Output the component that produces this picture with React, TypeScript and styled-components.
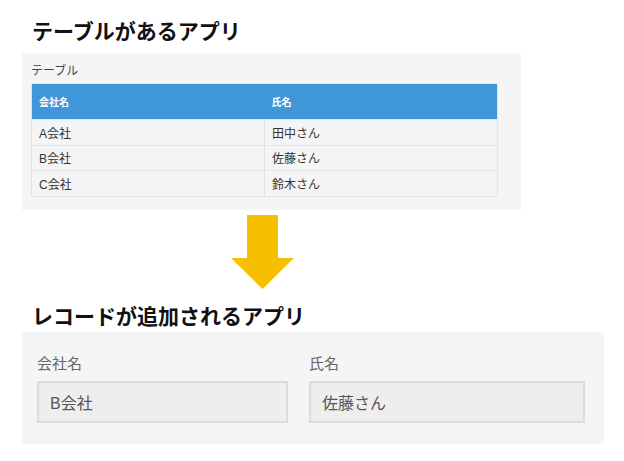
import React from "react";
import styled, { createGlobalStyle } from "styled-components";

const GlobalStyle = createGlobalStyle`
  html, body {
    margin: 0;
    padding: 0;
    background: #ffffff;
  }
  body {
    font-family: "Liberation Sans", "Noto Sans CJK JP", sans-serif;
    color: #333;
  }
`;

const rows = [
  { company: "A会社", name: "田中さん" },
  { company: "B会社", name: "佐藤さん" },
  { company: "C会社", name: "鈴木さん" },
];

const App = () => {
  return (
    <Page>
      <GlobalStyle />
      <Heading>テーブルがあるアプリ</Heading>
      <TablePanel>
        <PanelLabel>テーブル</PanelLabel>
        <Table>
          <thead>
            <tr>
              <HeadCell>会社名</HeadCell>
              <HeadCell>氏名</HeadCell>
            </tr>
          </thead>
          <tbody>
            {rows.map((row) => (
              <tr key={row.company}>
                <BodyCell>{row.company}</BodyCell>
                <BodyCell>{row.name}</BodyCell>
              </tr>
            ))}
          </tbody>
        </Table>
      </TablePanel>

      <ArrowBox>
        <svg width="63" height="74" viewBox="0 0 63 74">
          <rect x="16" y="0" width="31" height="44" fill="#f6bf00" />
          <polygon points="0,43 63,43 31.5,74" fill="#f6bf00" />
        </svg>
      </ArrowBox>

      <Heading $second>レコードが追加されるアプリ</Heading>
      <FormPanel>
        <Field>
          <FieldLabel>会社名</FieldLabel>
          <FieldValue>B会社</FieldValue>
        </Field>
        <Field>
          <FieldLabel>氏名</FieldLabel>
          <FieldValue>佐藤さん</FieldValue>
        </Field>
      </FormPanel>
    </Page>
  );
};

const Page = styled.div`
  width: 624px;
  padding-top: 18px;
`;

const Heading = styled.h1<{ $second?: boolean }>`
  margin: 0 0 ${({ $second }) => ($second ? "5px" : "11px")} 32px;
  font-family: "Noto Sans CJK JP", sans-serif;
  font-size: 21px;
  line-height: 24px;
  font-weight: 700;
  color: #111;
`;

const TablePanel = styled.div`
  margin-left: 22px;
  width: 499px;
  box-sizing: border-box;
  padding: 9px 0 13px 9px;
  background: #f5f5f5;
`;

const PanelLabel = styled.div`
  font-size: 12px;
  line-height: 18px;
  color: #444;
  margin-bottom: 3px;
`;

const Table = styled.table`
  width: 467px;
  border-collapse: collapse;
  table-layout: fixed;
  border: 1px solid #e4e4e4;
`;

const HeadCell = styled.th`
  height: 35px;
  padding: 0 0 0 7px;
  background: #3f97da;
  color: #fff;
  font-size: 10px;
  font-weight: 700;
  text-align: left;
  border: none;
`;

const BodyCell = styled.td`
  height: 24.5px;
  padding: 0 0 0 7px;
  font-size: 12px;
  color: #333;
  background: #f5f5f5;
  border: 1px solid #e4e4e4;
`;

const ArrowBox = styled.div`
  display: flex;
  margin: 5px 0 14px 231px;
  height: 74px;
`;

const FormPanel = styled.div`
  margin-left: 22px;
  width: 582px;
  box-sizing: border-box;
  padding: 22px 19px 21px 15px;
  background: #f5f5f5;
  display: grid;
  grid-template-columns: 251px 276px;
  column-gap: 21px;
`;

const Field = styled.div`
  display: flex;
  flex-direction: column;
`;

const FieldLabel = styled.div`
  font-size: 15px;
  line-height: 20px;
  color: #666;
  margin-bottom: 7px;
`;

const FieldValue = styled.div`
  height: 42px;
  box-sizing: border-box;
  border: 2px solid #dcdcdc;
  background: #eeeeee;
  padding-left: 11px;
  display: flex;
  align-items: center;
  font-size: 16px;
  color: #555;
`;

export default App;
